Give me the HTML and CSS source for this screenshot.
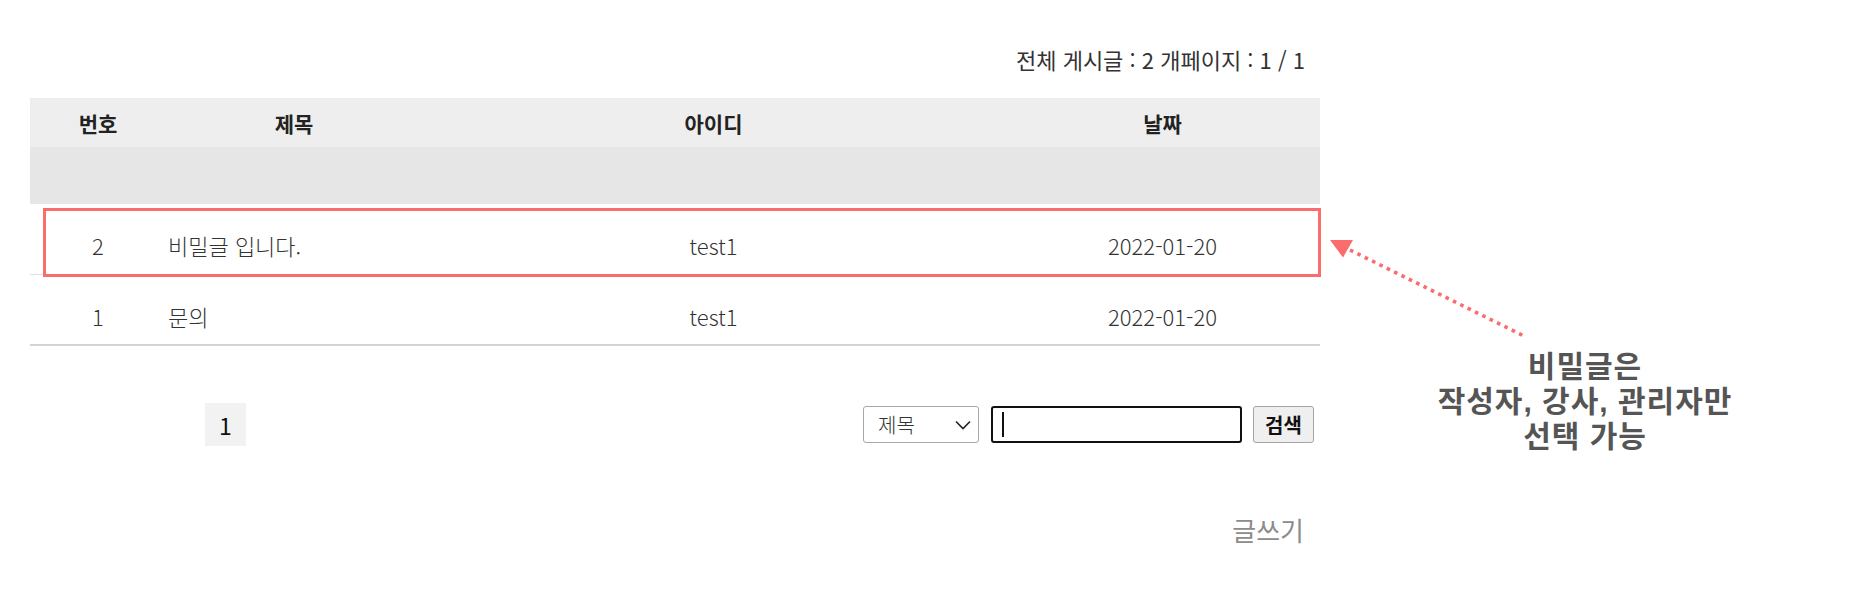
FILE: index.html
```html
<!DOCTYPE html>
<html lang="ko">
<head>
<meta charset="utf-8">
<title>게시판</title>
<link rel="stylesheet" href="styles.css">
</head>
<body>
<div class="page">
  <div class="board">
    <div class="info">전체 게시글 : 2 개페이지 : 1 / 1</div>
    <div class="table">
      <div class="row head">
        <div class="cell">번호</div>
        <div class="cell">제목</div>
        <div class="cell">아이디</div>
        <div class="cell">날짜</div>
      </div>
      <div class="row blank"></div>
      <div class="row item">
        <div class="cell">2</div>
        <div class="cell title">비밀글 입니다.</div>
        <div class="cell">test1</div>
        <div class="cell">2022-01-20</div>
      </div>
      <div class="row item last">
        <div class="cell">1</div>
        <div class="cell title">문의</div>
        <div class="cell">test1</div>
        <div class="cell">2022-01-20</div>
      </div>
    </div>
    <div class="bottom">
      <div class="pager"><span class="page-num">1</span></div>
      <form class="search">
        <div class="select-wrap">
          <select class="select"><option>제목</option></select>
          <svg class="chevron" width="16" height="10" viewBox="0 0 16 10"><path d="M1 1.5 L8 8.5 L15 1.5" fill="none" stroke="#222" stroke-width="1.6"/></svg>
        </div>
        <div class="input-wrap">
          <input class="input" type="text">
          <span class="caret"></span>
        </div>
        <button class="btn" type="button">검색</button>
      </form>
    </div>
    <div class="write"><a class="write-link" href="#">글쓰기</a></div>
  </div>

  <div class="highlight"></div>
  <svg class="arrow" width="220" height="120" viewBox="0 0 220 120">
    <line x1="30" y1="20" x2="206" y2="107" stroke="#fb6c6c" stroke-width="3.6" stroke-dasharray="3.6 4.6"/>
    <polygon points="10,10 33,10 23,27.5" fill="#fb6c6c"/>
  </svg>
  <div class="note">
    <div class="note-line">비밀글은</div>
    <div class="note-line">작성자, 강사, 관리자만</div>
    <div class="note-line">선택 가능</div>
  </div>
</div>
</body>
</html>
```

FILE: styles.css
```css
* { box-sizing: border-box; }

html, body {
  margin: 0;
  padding: 0;
  background: #ffffff;
}

body {
  font-family: "Noto Sans CJK KR", "Noto Sans", sans-serif;
  color: #333333;
}

.page {
  position: relative;
  width: 1850px;
  height: 594px;
  padding: 44px 0 0 30px;
  overflow: hidden;
}

.board {
  width: 1290px;
}

.info {
  height: 30px;
  line-height: 30px;
  font-size: 22px;
  text-align: right;
  padding-right: 15px;
  color: #333333;
  margin-bottom: 24px;
}

.row {
  display: grid;
  grid-template-columns: 136px 256px 583px 315px;
}

.cell {
  text-align: center;
  font-size: 22px;
  line-height: 30px;
  white-space: nowrap;
}

.head {
  height: 49px;
  align-items: center;
  background: #eeeeee;
}

.head .cell {
  font-weight: 700;
  font-size: 21px;
  color: #222222;
}

.blank {
  height: 57px;
  background: #e6e6e6;
}

.item {
  height: 71px;
  padding-top: 26px;
  border-bottom: 1px solid #e2e2e2;
  align-items: start;
}

.item.last {
  border-bottom: 2px solid #d3d3d3;
}

.item .cell {
  font-weight: 300;
  color: #333333;
}

.item .title {
  text-align: left;
  padding-left: 2px;
}

.bottom {
  display: flex;
  align-items: center;
  margin-top: 57px;
  height: 43px;
  padding-right: 6px;
}

.pager {
  margin-left: 175px;
}

.page-num {
  display: flex;
  align-items: center;
  justify-content: center;
  width: 41px;
  height: 43px;
  background: #f2f2f2;
  font-size: 23px;
  color: #111111;
}

.search {
  margin: 0 0 0 auto;
  display: flex;
  align-items: center;
}

.select-wrap {
  position: relative;
  width: 116px;
  height: 37px;
}

.select {
  appearance: none;
  -webkit-appearance: none;
  width: 116px;
  height: 37px;
  margin: 0;
  padding: 0 0 0 14px;
  border: 1px solid #a8a8a8;
  border-radius: 3px;
  background: #ffffff;
  font-family: "Noto Sans CJK KR", sans-serif;
  font-size: 20px;
  font-weight: 300;
  color: #333333;
}

.chevron {
  position: absolute;
  left: 92px;
  top: 14px;
  pointer-events: none;
}

.input-wrap {
  position: relative;
  margin-left: 12px;
  width: 251px;
  height: 37px;
}

.input {
  width: 251px;
  height: 37px;
  margin: 0;
  border: 2px solid #111111;
  border-radius: 3px;
  background: #ffffff;
  outline: none;
}

.caret {
  position: absolute;
  left: 11px;
  top: 6px;
  width: 2px;
  height: 25px;
  background: #111111;
}

.btn {
  margin-left: 11px;
  width: 61px;
  height: 37px;
  padding: 0;
  border: 1px solid #a4a4a4;
  border-radius: 3px;
  background: #efefef;
  font-family: "Noto Sans CJK KR", sans-serif;
  font-size: 20px;
  font-weight: 700;
  color: #111111;
}

.write {
  margin-top: 67px;
  text-align: right;
  padding-right: 16px;
  font-size: 26px;
  line-height: 34px;
}

.write-link {
  color: #8c8c8c;
  text-decoration: none;
}

.highlight {
  position: absolute;
  left: 43px;
  top: 208px;
  width: 1278px;
  height: 69px;
  border: 3px solid #fb6c6c;
}

.arrow {
  position: absolute;
  left: 1320px;
  top: 230px;
}

.note {
  position: absolute;
  left: 1385px;
  top: 349px;
  width: 400px;
  text-align: center;
  font-family: "Liberation Sans", "Noto Sans CJK KR", sans-serif;
  font-weight: 700;
  color: #555555;
}

.note-line {
  height: 35px;
  font-size: 30px;
  line-height: 35px;
  letter-spacing: 1px;
  white-space: nowrap;
}
```
